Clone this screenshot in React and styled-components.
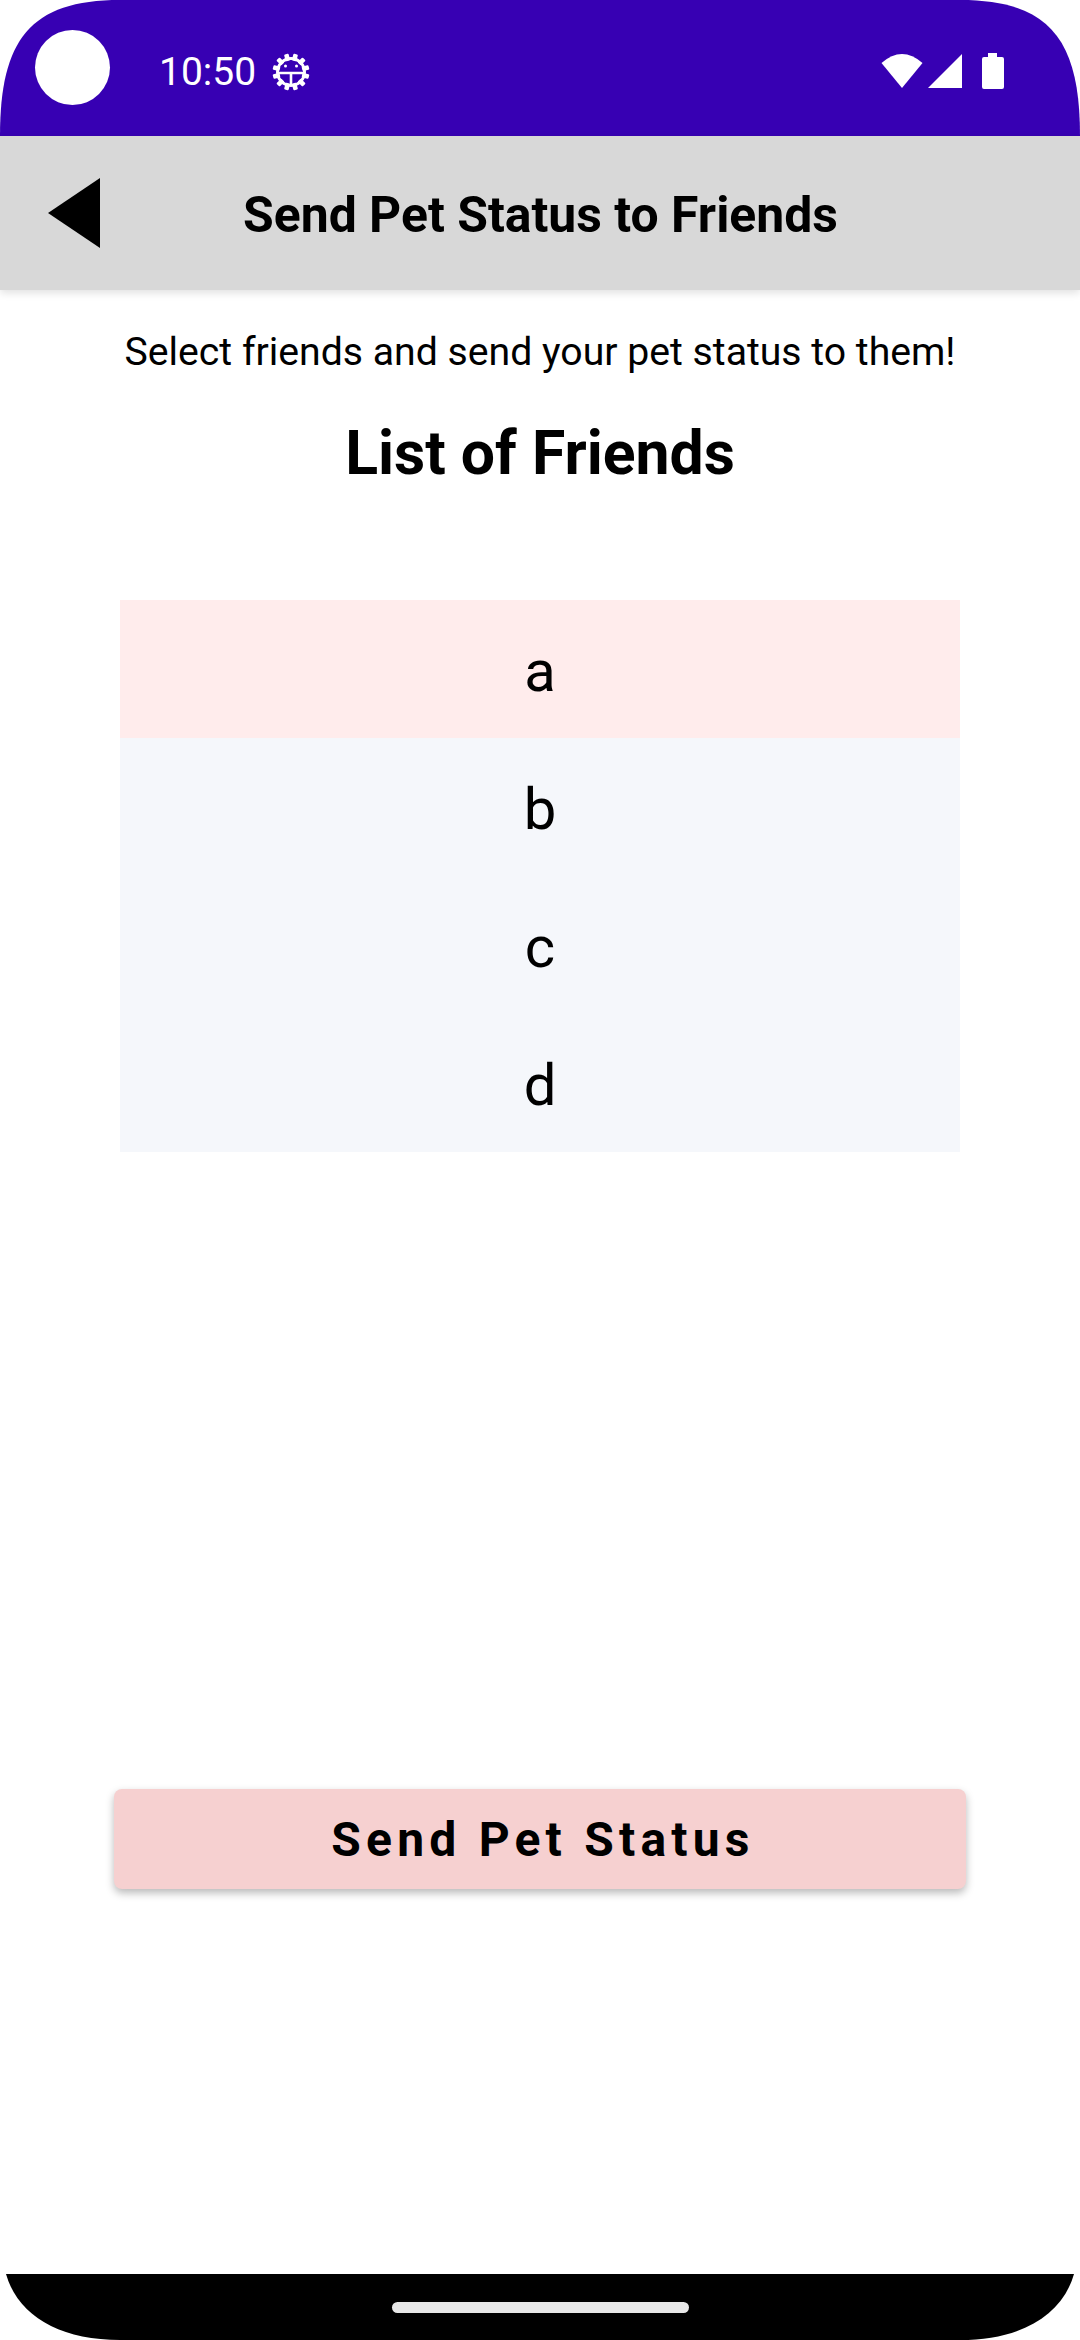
import React from 'react'
import styled, { createGlobalStyle } from 'styled-components'

const GlobalStyle = createGlobalStyle`
  html, body {
    margin: 0;
    padding: 0;
    background: #fff;
  }
  * {
    box-sizing: border-box;
  }
`

const Screen = styled.div`
  width: 1080px;
  height: 2340px;
  display: flex;
  flex-direction: column;
  background: #fff;
  overflow: hidden;
  font-family: Roboto, "Liberation Sans", sans-serif;
  color: #000;
`

const StatusBar = styled.div`
  height: 136px;
  flex: none;
  display: flex;
  align-items: center;
  padding: 0 76px 0 35px;
  background: #3700b3;
  clip-path: path('M0 136 C0 40 30 0 120 0 H960 C1050 0 1080 40 1080 136 Z');
  color: #fff;
`

const Camera = styled.div`
  width: 75px;
  height: 75px;
  margin-bottom: 1px;
  border-radius: 50%;
  background: #fff;
`

const Clock = styled.span`
  margin-left: 49px;
  margin-top: 8px;
  font-size: 39px;
  line-height: 46px;
`

const StatusIcons = styled.div`
  margin-left: auto;
  display: flex;
  align-items: center;
  height: 40px;
  margin-top: 6px;
`

const Header = styled.header`
  position: relative;
  height: 154px;
  flex: none;
  display: flex;
  align-items: center;
  padding-left: 47px;
  background: #d8d8d8;
  box-shadow: 0 3px 8px rgb(0 0 0 / 12%);
`

const BackButton = styled.button`
  display: flex;
  padding: 0;
  border: 0;
  background: none;
  filter: blur(0.6px);
`

const HeaderTitle = styled.h1`
  margin: 3px 0 0 142px;
  font-size: 49.9px;
  line-height: 56px;
  font-weight: 700;
`

const Content = styled.main`
  flex: 1;
  display: flex;
  flex-direction: column;
  align-items: center;
`

const Intro = styled.p`
  margin: 39px 0 0;
  font-size: 39.2px;
  line-height: 46px;
`

const ListTitle = styled.h2`
  margin: 44px 0 0;
  font-size: 60.7px;
  line-height: 70px;
  font-weight: 700;
`

const FriendList = styled.ul`
  width: 840px;
  margin: 111px 0 0;
  padding: 0;
  list-style: none;
`

const FriendRow = styled.li`
  height: 138px;
  display: flex;
  align-items: center;
  justify-content: center;
  padding-top: 3px;
  font-size: 58px;
  background: ${(p) => (p.$selected ? '#ffecec' : '#f5f7fb')};
`

const SendButton = styled.button`
  width: 852px;
  height: 100px;
  margin-top: 637px;
  padding: 0 0 0 6px;
  border: 0;
  border-radius: 8px;
  background: #f6d0d0;
  box-shadow: 0 4px 8px rgb(0 0 0 / 28%);
  font-family: inherit;
  font-size: 48px;
  font-weight: 700;
  letter-spacing: 5.2px;
  color: #000;
`

const NavBar = styled.div`
  height: 66px;
  flex: none;
  display: flex;
  justify-content: center;
  align-items: flex-start;
  padding-top: 28px;
  background: #000;
  clip-path: path('M6 0 C18 42 60 66 120 66 H960 C1020 66 1062 42 1074 0 Z');
`

const HomePill = styled.div`
  width: 297px;
  height: 11px;
  border-radius: 6px;
  background: #e8e8e8;
`

const GearIcon = () => (
  <svg width="40" height="40" viewBox="0 0 40 40" style={{ marginLeft: 15, marginTop: 7 }}>
    <g fill="#fff">
      {[...Array(12)].map((_, i) => (
        <rect key={i} x="17.7" y="1.5" width="4.6" height="7" rx="1" transform={`rotate(${i * 30 + 15} 20 20)`} />
      ))}
    </g>
    <circle cx="20" cy="20" r="13.5" fill="none" stroke="#fff" strokeWidth="3" />
    <path d="M7 21h26M20 21V33" stroke="#fff" strokeWidth="2.6" fill="none" />
    <circle cx="14.5" cy="14" r="1.5" fill="#fff" />
    <circle cx="25.5" cy="14" r="1.5" fill="#fff" />
  </svg>
)

const WifiIcon = () => (
  <svg width="42" height="36" viewBox="0 0 42 36">
    <path d="M0.5 10 Q21 -8 41.5 10 L21 35 Z" fill="#fff" />
  </svg>
)

const SignalIcon = () => (
  <svg width="36" height="36" viewBox="0 0 36 36" style={{ marginLeft: 4 }}>
    <path d="M35 1V35H1Z" fill="#fff" />
  </svg>
)

const BatteryIcon = () => (
  <svg width="22" height="36" viewBox="0 0 22 36" style={{ marginLeft: 19 }}>
    <path d="M6 0h9v4h5a2 2 0 0 1 2 2v28a2 2 0 0 1-2 2H2a2 2 0 0 1-2-2V6a2 2 0 0 1 2-2h4Z" fill="#fff" />
  </svg>
)

const BackIcon = () => (
  <svg width="54" height="72" viewBox="0 0 54 72">
    <path d="M1 36 53 1V71Z" fill="#000" />
  </svg>
)

const friends = ['a', 'b', 'c', 'd']

const App = () => {
  return (
    <Screen>
      <GlobalStyle />
      <StatusBar>
        <Camera />
        <Clock>10:50</Clock>
        <GearIcon />
        <StatusIcons>
          <WifiIcon />
          <SignalIcon />
          <BatteryIcon />
        </StatusIcons>
      </StatusBar>
      <Header>
        <BackButton aria-label="Back"><BackIcon /></BackButton>
        <HeaderTitle>Send Pet Status to Friends</HeaderTitle>
      </Header>
      <Content>
        <Intro>Select friends and send your pet status to them!</Intro>
        <ListTitle>List of Friends</ListTitle>
        <FriendList>
          {friends.map((name, index) => (
            <FriendRow key={name} $selected={index === 0}>{name}</FriendRow>
          ))}
        </FriendList>
        <SendButton>Send Pet Status</SendButton>
      </Content>
      <NavBar>
        <HomePill />
      </NavBar>
    </Screen>
  )
}

export default App
